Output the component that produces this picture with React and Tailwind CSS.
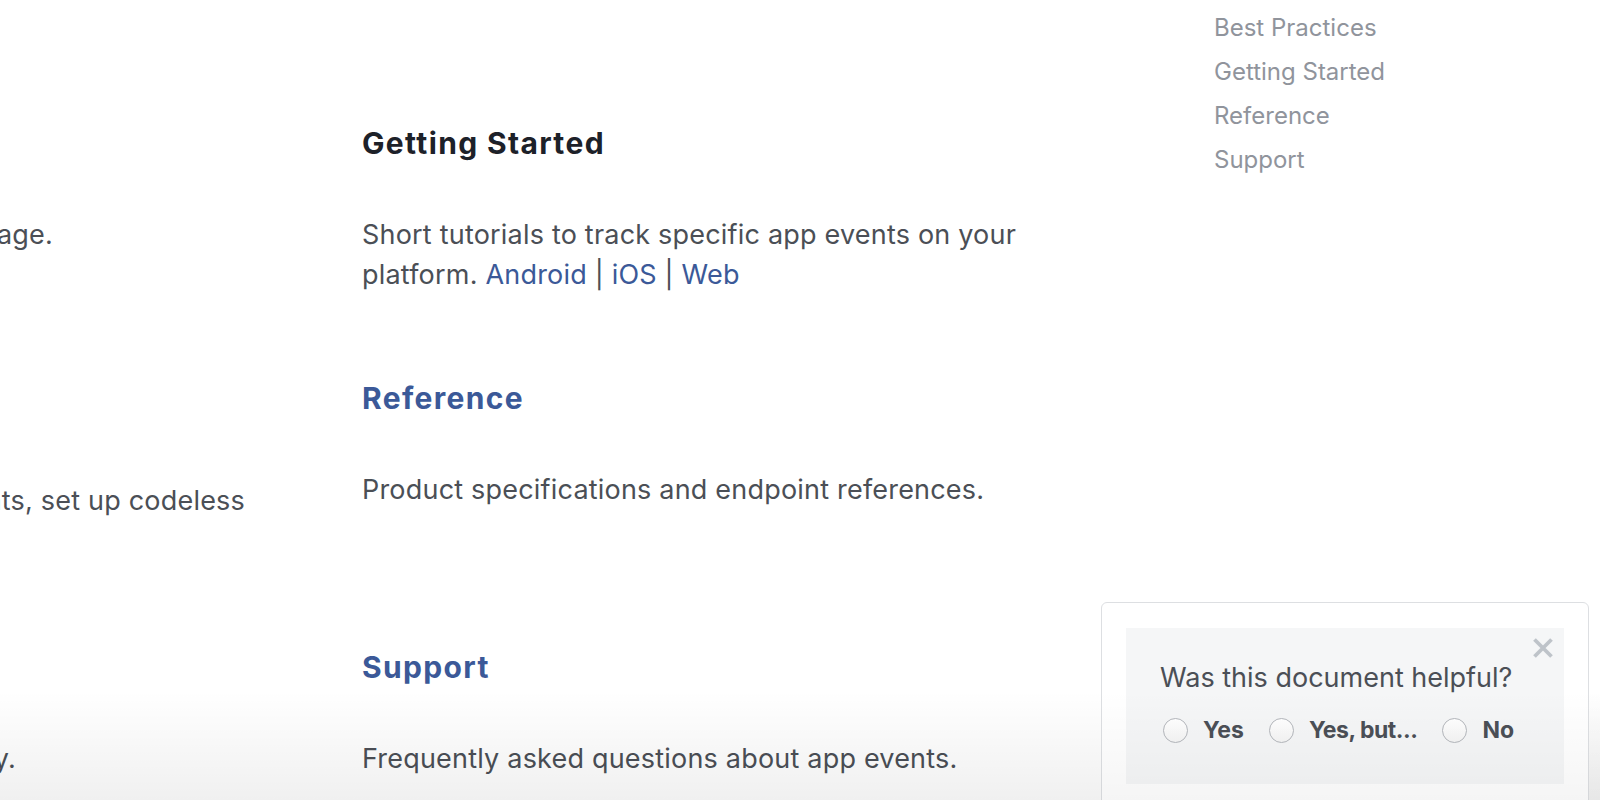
import React, { useState } from 'react';

const secciones = [
  {
    izquierda: { lineas: [{ texto: 'Learn about the key concepts described on this page.', pr: 'pr-[247px]' }], mt: 'mt-[54px]' },
    derecha: {
      titulo: 'Getting Started',
      tituloColor: 'text-[#1d2129]',
      cuerpo: (
        <>
          Short tutorials to track specific app events on your platform.{' '}
          <a href="#" className="text-[#3b5998]">Android</a> |{' '}
          <a href="#" className="text-[#3b5998]">iOS</a> |{' '}
          <a href="#" className="text-[#3b5998]">Web</a>
        </>
      ),
    },
  },
  {
    izquierda: { lineas: [{ texto: 'Learn how to log events, set up codeless', pr: 'pr-[55px]' }], mt: 'mt-[65px]' },
    derecha: {
      titulo: 'Reference',
      tituloColor: 'text-[#3b5998]',
      cuerpo: 'Product specifications and endpoint references.',
    },
  },
  {
    izquierda: { lineas: [{ texto: 'Tips for using app events for analytics and ads effectively.', pr: 'pr-[284px]' }], mt: 'mt-[54px]' },
    derecha: {
      titulo: 'Support',
      tituloColor: 'text-[#3b5998]',
      cuerpo: 'Frequently asked questions about app events.',
    },
  },
];

const navItems = ['Best Practices', 'Getting Started', 'Reference', 'Support'];

function Radio({ label, checked, onClick, labelClass = '' }) {
  return (
    <button onClick={onClick} className="flex items-center gap-[15px]">
      <span className="w-[25px] h-[25px] rounded-full border border-[#b4b7bc] bg-[linear-gradient(to_bottom,#ffffff,#f4f4f4)] flex items-center justify-center">
        {checked && <span className="w-[11px] h-[11px] rounded-full bg-[#4b4f56]" />}
      </span>
      <span className={`text-[23px] font-bold text-[#4b4f56] leading-[26px] ${labelClass}`}>{label}</span>
    </button>
  );
}

export default function App() {
  const [respuesta, setRespuesta] = useState('');
  const [visible, setVisible] = useState(true);

  return (
    <div className="relative h-[800px] w-[1600px] overflow-hidden bg-white font-['Inter','Liberation_Sans',sans-serif]">
      <div className="flex">
        {/* columnas de contenido */}
        <div className="grid grid-cols-[300px_700px] grid-rows-[255px_269px_auto] gap-x-[62px] pt-[125px]">
          {secciones.map((s, i) => (
            <React.Fragment key={i}>
              <div className="min-w-0">
                <div className="h-[36px]" />
                <div className={s.izquierda.mt}>
                  {s.izquierda.lineas.map((l, j) => (
                    <div key={j} className={`flex justify-end whitespace-nowrap text-[27px] tracking-[0.2px] leading-[40px] text-[#4b4f56] ${l.pr}`}>
                      {l.texto}
                    </div>
                  ))}
                </div>
              </div>
              <div>
                <h2 className={`text-[30px] tracking-[0.045em] leading-[36px] font-bold ${s.derecha.tituloColor}`}>{s.derecha.titulo}</h2>
                <p className="mt-[54px] text-[27px] tracking-[0.2px] leading-[40px] text-[#4b4f56]">{s.derecha.cuerpo}</p>
              </div>
            </React.Fragment>
          ))}
        </div>

        {/* navegación lateral */}
        <nav className="ml-[152px] pt-[6px] flex flex-col">
          {navItems.map((item) => (
            <a key={item} href="#" className="text-[24px] leading-[44px] text-[#90949c] whitespace-nowrap">
              {item}
            </a>
          ))}
        </nav>
      </div>

      {/* degradado inferior */}
      <div className="pointer-events-none absolute inset-x-0 bottom-0 h-[110px] bg-[linear-gradient(to_bottom,rgba(0,0,0,0),rgba(0,0,0,0.06))]" />

      {/* widget de feedback */}
      {visible && (
        <div className="absolute left-[1101px] top-[602px] w-[488px] h-[240px] bg-white border border-[#dddfe2] rounded-[6px] px-[24px] pt-[25px]">
          <div className="relative h-[156px] bg-[#f5f6f7] px-[34px] pt-[34px]">
            <button
              onClick={() => setVisible(false)}
              className="absolute right-[11px] top-[10px]"
              aria-label="Close"
            >
              <svg width="20" height="20" viewBox="0 0 20 20">
                <path d="M1.5 1.5 L18.5 18.5 M18.5 1.5 L1.5 18.5" stroke="#bec3c9" strokeWidth="3.8" strokeLinecap="butt" />
              </svg>
            </button>
            <p className="text-[27px] leading-[32px] text-[#4b4f56]">Was this document helpful?</p>
            <div className="mt-[23px] flex items-center gap-[25px] pl-[3px]">
              <Radio label="Yes" checked={respuesta === 'si'} onClick={() => setRespuesta('si')} />
              <Radio label="Yes, but..." labelClass="tracking-[-0.02em]" checked={respuesta === 'pero'} onClick={() => setRespuesta('pero')} />
              <Radio label="No" checked={respuesta === 'no'} onClick={() => setRespuesta('no')} />
            </div>
          </div>
        </div>
      )}
      <div className="pointer-events-none absolute left-[1101px] right-0 bottom-0 h-[110px] bg-[linear-gradient(to_bottom,rgba(0,0,0,0),rgba(0,0,0,0.04))]" />
    </div>
  );
}
